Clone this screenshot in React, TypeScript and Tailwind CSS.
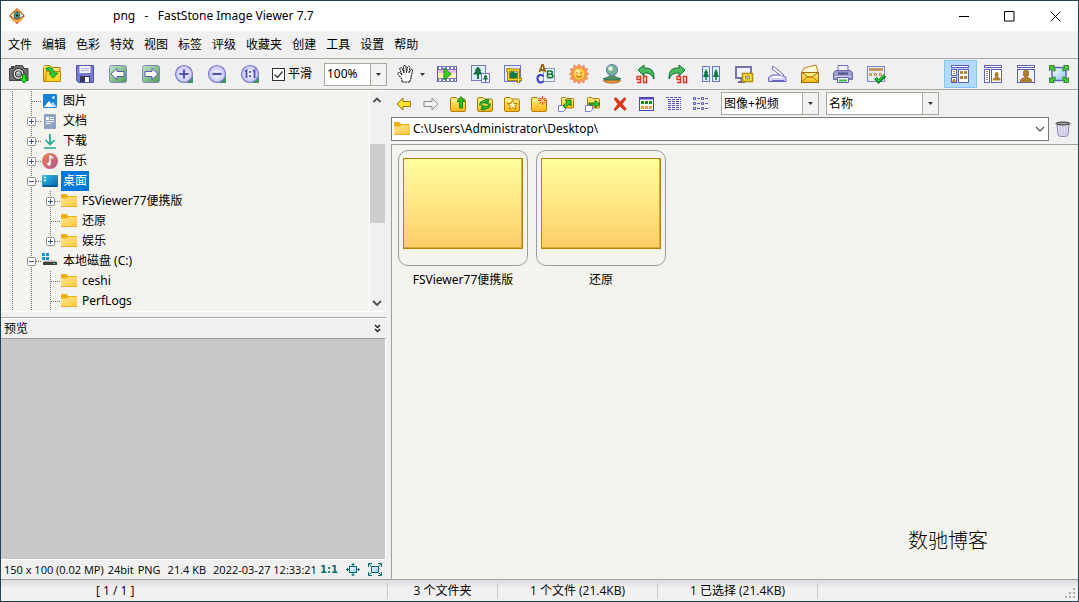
import { useState } from 'react';
import type { ReactNode } from 'react';

type IconProps = { children: ReactNode; size?: number; box?: number };

function Icon({ children, size = 20, box = 20 }: IconProps) {
  return (
    <svg width={size} height={size} viewBox={`0 0 ${box} ${box}`} fill="none" className="shrink-0" aria-hidden="true">
      {children}
    </svg>
  );
}

const Gradients = () => (
  <svg width="0" height="0" className="absolute" aria-hidden="true">
    <defs>
      <linearGradient id="gold" x1="0" y1="0" x2="0" y2="1">
        <stop offset="0" stopColor="#fff08a" />
        <stop offset="1" stopColor="#f9b410" />
      </linearGradient>
      <linearGradient id="folder" x1="0" y1="0" x2="1" y2="1">
        <stop offset="0" stopColor="#ffe595" />
        <stop offset="1" stopColor="#ffc83c" />
      </linearGradient>
      <linearGradient id="green" x1="0" y1="0" x2="1" y2="1">
        <stop offset="0" stopColor="#c3e6c6" />
        <stop offset="1" stopColor="#4f9a58" />
      </linearGradient>
      <radialGradient id="lilac">
        <stop offset="0" stopColor="#ffffff" />
        <stop offset="1" stopColor="#c0c0fa" />
      </radialGradient>
      <linearGradient id="sky" x1="0" y1="0" x2="1" y2="1">
        <stop offset="0" stopColor="#ffffff" />
        <stop offset="1" stopColor="#8cc4f4" />
      </linearGradient>
      <linearGradient id="screen" x1="0" y1="0" x2="1" y2="1">
        <stop offset="0" stopColor="#35bfe6" />
        <stop offset="1" stopColor="#0763ad" />
      </linearGradient>
      <linearGradient id="note" x1="0" y1="0" x2="1" y2="1">
        <stop offset="0" stopColor="#ef8354" />
        <stop offset="1" stopColor="#b1538f" />
      </linearGradient>
    </defs>
  </svg>
);

/* Main toolbar icons */

const Camera = () => (
  <Icon>
    <path d="M.5 4.500h4l2-3h7l1.500 3h4v12H.5z" fill="#6e6e6e" stroke="#444" />
    <path d="M2 3h3" stroke="#444" strokeWidth="2" />
    <circle cx="9.500" cy="10" r="5.500" fill="#e0e0e0" stroke="#222" />
    <circle cx="9.500" cy="10" r="3.200" fill="#9a9fa8" stroke="#333" />
    <path d="M7.500 9.500q1-2 3-1.500" stroke="#fff" />
    <path d="M13.500 10.500h3v4H19l-4 4.500-4-4.500h2.500z" fill="#1fe61f" stroke="#0a8a0a" />
  </Icon>
);

const OpenFolder = () => (
  <Icon>
    <path d="M1.500 17.500V3.500l1.500-2h5l2 2h8v14z" fill="url(#gold)" stroke="#b37900" />
    <path d="M4 17.500V7.500h14.500v10z" fill="#ffd52e" stroke="#c18b00" />
    <path d="M4 4q7-2 8.500 5H16l-5 5-4-5h2.500Q9 6 4 6z" fill="#25d13b" stroke="#087b1a" strokeWidth=".8" />
  </Icon>
);

const Save = () => (
  <Icon>
    <path d="M1.500 1.500h17v17h-15l-2-2z" fill="#7478cf" stroke="#5054b0" />
    <path d="M4.500 2h11v7h-11z" fill="#f4f4ff" />
    <path d="M6 4.500h8M6 6.500h8" stroke="#b0b0d8" />
    <path d="M5 12h10v6H5z" fill="#35385a" />
    <path d="M10 13h4v5h-4z" fill="#fff" />
  </Icon>
);

const PageArrow = ({ flip }: { flip?: boolean }) => (
  <Icon>
    <rect x="1.500" y="1.500" width="17" height="17" rx="2" fill="url(#green)" stroke="#7c8ac0" />
    <path
      d={flip ? 'M17 10l-6-5.500v3H4v5h7v3z' : 'M3 10l6-5.500v3h7v5H9v3z'}
      fill="#fff"
      stroke="#5a5ab5"
    />
  </Icon>
);

const Lens = ({ children }: { children: ReactNode }) => (
  <Icon>
    <path d="M19 12v7h-7z" fill="#3c9552" />
    <circle cx="10" cy="10" r="8.500" fill="url(#lilac)" stroke="#7878cc" strokeWidth="1.200" />
    {children}
  </Icon>
);

const ZoomIn = () => (
  <Lens>
    <path d="M5.500 10h9M10 5.500v9" stroke="#5050b5" strokeWidth="2.200" />
  </Lens>
);

const ZoomOut = () => (
  <Lens>
    <path d="M5.500 10h9" stroke="#5050b5" strokeWidth="2.200" />
  </Lens>
);

const ActualSize = () => (
  <Lens>
    <path d="M5 7.500l1.500-1V14M13 7.500l1.500-1V14M10 7v2M10 11v2" stroke="#5050b5" strokeWidth="1.800" />
  </Lens>
);

const Hand = () => (
  <Icon>
    <path
      d="M6 18v-3L2.500 11q-1.500-2 0-2.500 1-.3 2 1L6 11 4 5.500q-.4-1.800.8-2 1-.1 1.500 1.300L8 9 7.500 3q0-1.500 1.300-1.500Q10 1.500 10 3l.5 5.500 1-5q.4-1.400 1.500-1.200 1 .2.8 1.600L13 9l1.500-3q.7-1 1.600-.6.8.4.4 1.600L15 13v2l-1 1v2z"
      fill="#fff"
      stroke="#000"
      strokeDasharray="2 .6"
    />
  </Icon>
);

const Film = () => (
  <Icon>
    <path d="M0 2h20v16H0z" fill="#7878cc" />
    <path d="M0 6h20v8H0z" fill="#f4b8e4" />
    <path d="M0 9h20v5H0z" fill="#fff1b8" />
    <path d="M2 4h17M2 16h17" stroke="#fff" strokeWidth="2" strokeDasharray="2 2" />
    <path d="M7 4l7 6-7 6z" fill="#3bd21d" stroke="#128d0d" />
    <path d="M.5 2v16M19.500 2v16" stroke="#5c5cb5" />
  </Icon>
);

const Resize = () => (
  <Icon>
    <rect x="1.500" y="1.500" width="14" height="15" fill="#dceefd" stroke="#7777c8" />
    <path d="M8 2.500l3.500 4H10l3 4H9v4.500H7v-4.500H3l3-4H4.500z" fill="#11753f" />
    <rect x="11.500" y="9.500" width="8" height="9" fill="#f6faff" stroke="#7777c8" />
    <path d="M15.500 10.500l2 2.500h-1l2 2.500H16V18h-1v-2.500h-2.500l2-2.500h-1z" fill="#11753f" />
  </Icon>
);

const Crop = () => (
  <Icon>
    <rect x="1.500" y="1.500" width="16" height="16" fill="#e2edff" stroke="#7474c8" />
    <path d="M6 5h9v9H6z" fill="#a9d8f3" />
    <path d="M9 6l3 3h3v6H6v-4z" fill="#157a42" />
    <path d="M3 6h12.500v13M5.500 4v11.500H19" stroke="#8b6700" strokeWidth="3" />
    <path d="M3.500 6h12v12.500M5.500 4.500v11h13" stroke="#ffdc22" strokeWidth="1.400" />
  </Icon>
);

const Draw = () => (
  <Icon>
    <rect x="7.500" y="4.500" width="11" height="13" fill="#ebf4ff" stroke="#9393d0" />
    <path d="M3.500 8l2.500-7h1l2.500 7M5 6h4" stroke="#9a6210" strokeWidth="1.800" />
    <path d="M7.500 12.500Q6.500 10.500 4 11t-2.500 3.500T4 18.500q2.500.5 3.500-1.500" stroke="#2c3fd1" strokeWidth="2" />
    <path d="M11.500 6.500v7M11.500 7h2.800q2 0 2 1.600t-2 1.600h-2.800 3q2.500 0 2.500 1.700t-2.500 1.700h-3" stroke="#167b22" strokeWidth="1.600" />
  </Icon>
);

const Sun = () => (
  <Icon>
    <path
      d="M10 0l2 3 3-2 .5 3.500 3.500.5-2 3 3 2-3 2 2 3-3.500.5L15 19l-3-2-2 3-2-3-3 2-.5-3.500L1 15l2-3-3-2 3-2-2-3 3.500-.5L5 1l3 2z"
      fill="#f79a60"
      stroke="#ee6c3c"
      strokeWidth=".6"
    />
    <circle cx="10" cy="10" r="6" fill="#ffcf45" stroke="#e59a30" />
    <circle cx="8.500" cy="8" r="2.200" fill="#fff4b0" />
    <path d="M8 8v1.500M12 8v1.500M7 11.500q3 3.500 6 0" stroke="#a84a13" />
  </Icon>
);

const Stamp = () => (
  <Icon>
    <ellipse cx="10" cy="16.500" rx="8.500" ry="2.500" fill="#f39a3f" stroke="#b9601d" />
    <path d="M1.500 14.500q7-1 7-5h3q0 4 7 5l-1 1.500h-15z" fill="#4d946a" stroke="#296a4a" />
    <circle cx="10" cy="6" r="5.500" fill="#77b296" stroke="#5b7ba1" />
    <circle cx="8.500" cy="4.500" r="2.300" fill="#eaf8f2" />
  </Icon>
);

const RotateGlyph = () => (
  <path d="M5.500 15.500H2v-3h3.500v6H2M8.500 12.500h3v6h-3z" stroke="#e03a1c" strokeWidth="1.400" />
);

const RotateLeft = () => (
  <Icon>
    <path d="M3 6l6-5v3q11-1 10 11-3-7-10-6v3z" fill="#4bbb5e" stroke="#146c36" />
    <RotateGlyph />
  </Icon>
);

const RotateRight = () => (
  <Icon>
    <path d="M17 6l-6-5v3Q0 3 1 15q3-7 10-6v3z" fill="#4bbb5e" stroke="#146c36" />
    <g transform="translate(7 0)">
      <RotateGlyph />
    </g>
  </Icon>
);

const Compare = () => (
  <Icon>
    <rect x="1.500" y="2.500" width="7" height="15" fill="#d5efff" stroke="#7272c0" />
    <rect x="11.500" y="2.500" width="7" height="15" fill="#d5efff" stroke="#7272c0" />
    <path d="M5 5l2 4h-.7L8 13H5.700v3H4.300v-3H2l1.700-4H3zM15 5l2 4h-.7l1.700 4h-2.300v3h-1.400v-3H12l1.700-4H13z" fill="#08763e" />
  </Icon>
);

const SlideShow = () => (
  <Icon>
    <rect x="2" y="3" width="15" height="11" fill="#eef3ff" stroke="#6868a8" strokeWidth="1.800" />
    <path d="M4 18h7M7.500 15v3" stroke="#6868a8" strokeWidth="2" />
    <rect x="8.500" y="9.500" width="10" height="8" fill="#ffe35a" stroke="#b39200" strokeWidth="1.600" />
    <path d="M11.500 12h4v3h-4z" fill="#a9bff0" stroke="#b58b00" />
  </Icon>
);

const Scanner = () => (
  <Icon>
    <path d="M1.500 13.500L5 11h10l4 2.500v4h-17.500z" fill="#d2d2f8" stroke="#6464be" />
    <path d="M6 2l11 9-2 1.500L5 5z" fill="#fff" stroke="#6767bc" />
    <path d="M4 14h13l-3-2H8z" fill="#fff" />
    <path d="M5 16.500h12" stroke="#6767bc" />
  </Icon>
);

const Mail = () => (
  <Icon>
    <path d="M2 8l2-4 12-3 2 7" fill="#fff8d8" stroke="#b98512" />
    <path d="M1.500 8.500v10h17v-10L10 12z" fill="url(#gold)" stroke="#a06800" />
    <path d="M2 8.500h16L12 13H8z" fill="#ffe98a" stroke="#a86e00" />
    <path d="M2 18l5-5h6l5 5" stroke="#b87e00" />
  </Icon>
);

const Printer = () => (
  <Icon>
    <path d="M5 1.500h10v7H5z" fill="#f0f0ff" stroke="#7070b8" />
    <path d="M.5 8.500L3 6.500h14l2.500 2v7H.5z" fill="#9c9ccc" stroke="#6868aa" />
    <path d="M5 9.500h10" stroke="#4c4c80" strokeWidth="2" />
    <path d="M2 12.500h16" stroke="#d4d4f3" />
    <path d="M4.500 13.500h11v5h-11z" fill="#f4f4ff" stroke="#6464ae" />
    <path d="M6 16.500h8" stroke="#38bd45" strokeWidth="2" />
  </Icon>
);

const Settings = () => (
  <Icon>
    <rect x="1.500" y="2.500" width="17" height="15" fill="#e4eefe" stroke="#7f84cd" />
    <path d="M3 4h14v3H3z" fill="#c39a5c" />
    <path d="M3.500 9.500h2v2h-2zM8.500 9.500h2v2h-2zM13.500 9.500h2v2h-2z" fill="#fff" stroke="#bd8528" />
    <path d="M9.500 14l3 3.500 6.500-6" stroke="#087c14" strokeWidth="3.400" />
    <path d="M10 14.500l2.500 2.500 6-5.500" stroke="#35cc36" strokeWidth="1.400" />
  </Icon>
);

/* View mode icons */

const person = 'M8 6a3 3 0 0 1 6 0v3l-1 1v1q4 1 4 3v2H5v-2q0-2 4-3v-1L8 9z';

const ViewBrowser = () => (
  <Icon>
    <rect x="1.500" y="1.500" width="17" height="2" fill="#fff" stroke="#6060b8" />
    <rect x="1.500" y="5.500" width="5" height="6" fill="#fff" stroke="#6060b8" />
    <path d="M3 7.500h2M3 9.500h2" stroke="#b78b3c" />
    <rect x="1.500" y="13.500" width="5" height="5" fill="#fff" stroke="#6060b8" />
    <path d="M2 18v-1l1-1v-1h2v1l1 1v1z" fill="#b78b3c" />
    <rect x="8.500" y="5.500" width="10" height="13" fill="#fff" stroke="#6060b8" />
    <path d="M10 8.500h3M14 8.500h3M10 13.500h3M14 13.500h3" stroke="#b0842d" strokeWidth="3" />
  </Icon>
);

const ViewSplit = () => (
  <Icon>
    <rect x="1.500" y="1.500" width="17" height="2" fill="#fff" stroke="#6060b8" />
    <rect x="1.500" y="5.500" width="5" height="13" fill="#fff" stroke="#6060b8" />
    <path d="M3 7.500h2M3 9.500h2M3 11.500h2M3 13.500h2M3 15.500h2" stroke="#b78b3c" />
    <rect x="8.500" y="5.500" width="10" height="13" fill="#fff" stroke="#6060b8" />
    <path d={person} transform="translate(6.500 6) scale(.65)" fill="#ad8030" />
  </Icon>
);

const ViewPreview = () => (
  <Icon>
    <rect x="1.500" y="1.500" width="17" height="2" fill="#fff" stroke="#6060b8" />
    <rect x="1.500" y="5.500" width="17" height="13" fill="#edf3ff" stroke="#6060b8" />
    <path d={person} transform="translate(-1 3) scale(1 .95)" fill="#ad8030" />
  </Icon>
);

const FullScreen = () => (
  <Icon>
    <rect x="3" y="3.500" width="14" height="13" fill="url(#sky)" stroke="#5e5eb8" strokeWidth="1.500" />
    <path
      d="M.5 1.500h5L4.200 3 7 5.700 5.200 7.500 2.500 4.800.5 6.500zM19.500 1.500h-5L15.800 3 13 5.700l1.800 1.800 2.700-2.700 2 1.700zM.5 18.500h5L4.200 17 7 14.300l-1.800-1.800-2.700 2.700-2-1.700zM19.500 18.500h-5l1.300-1.500-2.800-2.700 1.800-1.800 2.700 2.700 2-1.700z"
      fill="#4fce38"
      stroke="#137d13"
      strokeWidth=".8"
    />
  </Icon>
);

/* Navigation toolbar icons, 18px */

const Back = () => (
  <Icon size={18} box={18}>
    <path d="M2 9l6-6v3.500h7.500v5H8V15z" fill="#ffe13e" stroke="#a57200" />
  </Icon>
);

const Forward = () => (
  <Icon size={18} box={18}>
    <path d="M16 9l-6-6v3.500H2v5h8V15z" fill="#f4f4f4" stroke="#8b8b8b" />
  </Icon>
);

const GoldFolder = ({ children }: { children: ReactNode }) => (
  <Icon size={18} box={18}>
    <path d="M1.500 4q0-1.500 1.500-1.500h4l1.500 1.500H15q1.500 0 1.500 1.500V15q0 1.500-1.500 1.500H3q-1.500 0-1.500-1.500z" fill="url(#gold)" stroke="#b37c08" />
    <path d="M3 5.500h5" stroke="#fffbd0" />
    {children}
  </Icon>
);

const FolderUp = () => (
  <GoldFolder>
    <path d="M10.500 13V6.500H8l4-5 4 5h-2.500V13z" fill="#20c520" stroke="#086d08" strokeWidth=".8" />
  </GoldFolder>
);

const FolderRefresh = () => (
  <GoldFolder>
    <path d="M4.500 10.500q0-4 4.500-4M13.500 8.500q0 4.500-4.500 4.500" stroke="#087d16" strokeWidth="2.600" />
    <path d="M9 4.500h4L12 9 8 8zM9 15H5l1-4.500 4 1z" fill="#1fa82c" stroke="#087d16" strokeWidth=".6" />
    <path d="M4.500 10.500q0-4 4.500-4M13.500 8.500q0 4.500-4.500 4.500" stroke="#5fe85f" strokeWidth=".8" />
  </GoldFolder>
);

const FolderStar = () => (
  <GoldFolder>
    <path d="M9.500 5l1.500 3.500h3.500l-2.700 2.300 1 3.700-3.300-2-3.300 2 1-3.700L4.500 8.500H8z" fill="#fff8bd" stroke="#b98500" />
  </GoldFolder>
);

const FolderNew = () => (
  <GoldFolder>
    <path d="M12.500 1v9M8 5.500h9M9.500 2.500l6 6M15.500 2.500l-6 6" stroke="#f04725" />
    <circle cx="12.500" cy="5.500" r="1.500" fill="#ffe4a0" />
  </GoldFolder>
);

const PageCorner = () => (
  <path d="M1.500 10.500h7v4l-2 2h-5z" fill="#fff" stroke="#8080c8" />
);

const CopyTo = () => (
  <Icon size={18} box={18}>
    <path d="M4.500 3.500q0-1 1-1h3l1 1h6q1 0 1 1V12q0 1-1 1h-11z" fill="url(#gold)" stroke="#b37c08" />
    <PageCorner />
    <path d="M6 11l4-4-2-2h6v6l-2-2-4 4z" fill="#2ecc2e" stroke="#075f0a" strokeWidth=".8" />
  </Icon>
);

const MoveTo = () => (
  <Icon size={18} box={18}>
    <path d="M3.500 3.500q0-1 1-1h3l1 1h6q1 0 1 1V12q0 1-1 1h-11z" fill="url(#gold)" stroke="#b37c08" />
    <PageCorner />
    <path d="M5 8h6V5.500L16 9l-5 3.500V10H5z" fill="#2ecc2e" stroke="#075f0a" strokeWidth=".8" />
  </Icon>
);

const Delete = () => (
  <Icon size={18} box={18}>
    <path d="M3 4l2-1.500 4 4.500 4.500-4.500L15 4l-4 5 4.500 5-2 1.500L9 11l-4.500 4.500-1.500-1L7 9z" fill="#e23412" stroke="#bd2405" strokeWidth=".6" />
  </Icon>
);

const Thumbs = () => (
  <Icon size={18} box={18}>
    <rect x="1.500" y="2.500" width="14" height="13" fill="#fff" stroke="#4b4bbb" />
    <path d="M2 3.500h13" stroke="#4b4bbb" strokeWidth="2" />
    <path d="M3 7.500h11" stroke="#149014" strokeWidth="3" strokeDasharray="3 1" />
    <path d="M3 12.500h11" stroke="#f79a3a" strokeWidth="3" strokeDasharray="3 1" />
  </Icon>
);

const Details = () => (
  <Icon size={18} box={18}>
    <path d="M1 2.500h15M3 4.500h13M3 6.500h13M3 8.500h13M3 10.500h13M3 12.500h13M3 14.500h13" stroke="#5959ba" strokeDasharray="3 1" />
  </Icon>
);

const ListView = () => (
  <Icon size={18} box={18}>
    <path d="M1.500 2.500h2v2h-2zM1.500 7.500h2v2h-2zM1.500 12.500h2v2h-2zM9.500 2.500h2v2h-2zM9.500 7.500h2v2h-2zM9.500 12.500h2v2h-2z" stroke="#5959ba" />
    <path d="M5 3.500h3M5 8.500h3M5 13.500h3M13 3.500h3M13 8.500h3M13 13.500h3" stroke="#5959ba" />
  </Icon>
);

const Trash = () => (
  <Icon size={18} box={18}>
    <path d="M3 4l1 11q.3 1.500 5 1.500t5-1.500L15 4z" fill="#e4dff2" stroke="#8484b8" />
    <path d="M6 6l.5 9M9 6v9M12 6l-.5 9" stroke="#c2bbda" />
    <ellipse cx="9" cy="3.500" rx="7" ry="1.500" fill="#999" stroke="#353535" />
  </Icon>
);

/* Tree icons, 16px */

const Folder = () => (
  <Icon size={16} box={16}>
    <path d="M0 2q0-1 1-1h4.500L7 3h8q1 0 1 1v3H0z" fill="#f0ad12" />
    <path d="M0 5.500h6L7.500 4H16v9.500H0z" fill="url(#folder)" />
    <path d="M0 13.500h16" stroke="#e9ad29" />
  </Icon>
);

const Pictures = () => (
  <Icon size={16} box={16}>
    <rect x="1" y="1" width="14" height="14" rx="1" fill="#1683d8" />
    <path d="M2 14l5-6 5 6z" fill="#fff" />
    <path d="M9.500 10.500l1.500-1.500 4 5h-3z" fill="#b9dcf8" />
    <circle cx="11.500" cy="4.500" r="1.200" fill="#fff" />
  </Icon>
);

const Documents = () => (
  <Icon size={16} box={16}>
    <rect x="2" y="1" width="12" height="15" rx="1" fill="#8ba3c7" />
    <path d="M4 4h3v3H4z" fill="#fff" />
    <path d="M8 4.500h4M8 6.500h4M4 8.500h8M4 10.500h5" stroke="#fff" />
  </Icon>
);

const Downloads = () => (
  <Icon size={16} box={16}>
    <path d="M8 1v10M3.500 7L8 11.500 12.500 7M2 15h12" stroke="#18aa91" strokeWidth="1.700" />
  </Icon>
);

const Music = () => (
  <Icon size={16} box={16}>
    <circle cx="8" cy="8" r="8" fill="url(#note)" />
    <path d="M8 11V3q2 .5 3 2.500" stroke="#fff" strokeWidth="1.500" />
    <circle cx="7" cy="11" r="1.800" fill="#fff" />
  </Icon>
);

const Desktop = () => (
  <Icon size={16} box={16}>
    <rect x="0" y="2" width="16" height="12" rx="1" fill="url(#screen)" />
    <path d="M2 4.500h2M2 7.500h2" stroke="#fff" strokeWidth="1.600" />
    <path d="M1 13h14" stroke="#074f88" strokeWidth="1.500" />
  </Icon>
);

const Disk = () => (
  <Icon size={16} box={16}>
    <path d="M0 0h3v3H0zM4 0h3v3H4zM0 4h3v3H0zM4 4h3v3H4z" fill="#1593dc" />
    <path d="M3 7.500h10.500l1.500 2H1z" fill="#b4b4b4" />
    <path d="M1 9h14v3H1z" fill="#3d3f42" />
    <path d="M11 10.500h2" stroke="#45df75" />
  </Icon>
);

function Logo() {
  return (
    <Icon size={18} box={18}>
      <path d="M9 1l3 3H6zM9 17l3-3H6zM1 9l3-3v6zM17 9l-3-3v6z" fill="#db3524" />
      <circle cx="9" cy="9" r="6.500" fill="#f2a03c" />
      <path d="M2 8.500q7-8 14 0-7 7-14 0z" fill="#fff5df" stroke="#8a5a3c" />
      <circle cx="9" cy="8.500" r="3" fill="#5da98a" stroke="#345e50" />
      <circle cx="9" cy="8.500" r="1.200" fill="#102018" />
    </Icon>
  );
}

const menus = ['文件', '编辑', '色彩', '特效', '视图', '标签', '评级', '收藏夹', '创建', '工具', '设置', '帮助'];

const fileTools = [
  { label: '获取', icon: <Camera /> },
  { label: '打开', icon: <OpenFolder /> },
  { label: '保存', icon: <Save /> },
  { label: '上一张', icon: <PageArrow /> },
  { label: '下一张', icon: <PageArrow flip /> },
  { label: '放大', icon: <ZoomIn /> },
  { label: '缩小', icon: <ZoomOut /> },
  { label: '实际大小', icon: <ActualSize /> },
];

const editTools = [
  { label: '幻灯片', icon: <Film /> },
  { label: '调整大小', icon: <Resize /> },
  { label: '裁剪', icon: <Crop /> },
  { label: '绘图', icon: <Draw /> },
  { label: '调整光线', icon: <Sun /> },
  { label: '克隆', icon: <Stamp /> },
  { label: '向左旋转', icon: <RotateLeft /> },
  { label: '向右旋转', icon: <RotateRight /> },
  { label: '比较', icon: <Compare /> },
  { label: '墙纸', icon: <SlideShow /> },
  { label: '扫描', icon: <Scanner /> },
  { label: '邮件', icon: <Mail /> },
  { label: '打印', icon: <Printer /> },
  { label: '选项', icon: <Settings /> },
];

const viewTools = [
  { label: '浏览器', icon: <ViewBrowser /> },
  { label: '窗口', icon: <ViewSplit /> },
  { label: '预览', icon: <ViewPreview /> },
  { label: '全屏', icon: <FullScreen /> },
];

const navTools = [
  { label: '后退', icon: <Back /> },
  { label: '前进', icon: <Forward /> },
  { label: '向上', icon: <FolderUp /> },
  { label: '刷新', icon: <FolderRefresh /> },
  { label: '收藏', icon: <FolderStar /> },
  { label: '新建文件夹', icon: <FolderNew /> },
  { label: '复制到', icon: <CopyTo /> },
  { label: '移动到', icon: <MoveTo /> },
  { label: '删除', icon: <Delete /> },
  { label: '缩略图', icon: <Thumbs /> },
  { label: '详细信息', icon: <Details /> },
  { label: '列表', icon: <ListView /> },
];

// guide cells: '|' line, 't' branch, '+' / '-' branch with a toggle, 'e' last toggle of its branch
const tree = [
  { name: '图片', icon: <Pictures />, guides: '|t' },
  { name: '文档', icon: <Documents />, guides: '|+' },
  { name: '下载', icon: <Downloads />, guides: '|+' },
  { name: '音乐', icon: <Music />, guides: '|+' },
  { name: '桌面', icon: <Desktop />, guides: '|-' },
  { name: 'FSViewer77便携版', icon: <Folder />, guides: '||+' },
  { name: '还原', icon: <Folder />, guides: '||t' },
  { name: '娱乐', icon: <Folder />, guides: '||e' },
  { name: '本地磁盘 (C:)', icon: <Disk />, guides: '|-' },
  { name: 'ceshi', icon: <Folder />, guides: '||t' },
  { name: 'PerfLogs', icon: <Folder />, guides: '||t' },
];

function Guide({ kind }: { kind: string }) {
  const toggle = kind === '+' || kind === '-' || kind === 'e';
  return (
    <svg width="19" height="20" viewBox="0 0 19 20" fill="none" className="shrink-0" aria-hidden="true">
      <path d={kind === 'e' ? 'M9.500 0v10' : 'M9.500 0v20'} stroke="#707070" strokeDasharray="1 1" />
      {kind !== '|' && <path d="M10 10.500h9" stroke="#707070" strokeDasharray="1 1" />}
      {toggle && (
        <>
          <rect x="5.500" y="6.500" width="8" height="8" rx="1" fill="#fff" stroke="#919191" />
          <path d={kind === '-' ? 'M7 10.500h5' : 'M7 10.500h5M9.500 8v5'} stroke="#3c54a0" />
        </>
      )}
    </svg>
  );
}

type Tool = { label: string; icon: ReactNode };

function ToolButton({ tool, active }: { tool: Tool; active?: boolean }) {
  return (
    <button
      aria-label={tool.label}
      className={`flex h-7 w-[33px] shrink-0 items-center border pl-[5px] ${
        active ? 'border-[#84c5fb] bg-[#b3daff]' : 'border-transparent hover:bg-[#d8eafa]'
      }`}
    >
      {tool.icon}
    </button>
  );
}

function Combo({ label, options, className }: { label: string; options: string[]; className: string }) {
  return (
    <div className={`relative h-[23px] shrink-0 border border-[#aca899] bg-white ${className}`}>
      <select aria-label={label} className="block h-full w-full appearance-none bg-transparent pr-4 pl-[2px] outline-none">
        {options.map((o) => (
          <option key={o}>{o}</option>
        ))}
      </select>
      <span className="pointer-events-none absolute inset-y-0 right-0 flex w-4 items-center justify-center border-l border-[#aca899] bg-[#f3f3f3]">
        <Caret />
      </span>
    </div>
  );
}

const Caret = () => (
  <svg width="5" height="3" viewBox="0 0 5 3" aria-hidden="true">
    <path d="M0 0h5L2.500 3z" fill="#333" />
  </svg>
);

function Chevron({ up, thin }: { up?: boolean; thin?: boolean }) {
  return (
    <svg width="10" height="6" viewBox="0 0 10 6" fill="none" aria-hidden="true">
      <path
        d={up ? 'M1.500 5L5 1.500 8.500 5' : 'M1 1l4 4 4-4'}
        stroke="#505050"
        strokeWidth={thin ? 1.1 : 1.8}
      />
    </svg>
  );
}

export default function App() {
  const [selected, setSelected] = useState('桌面');
  const [path, setPath] = useState('C:\\Users\\Administrator\\Desktop\\');

  return (
    <div className="flex h-screen flex-col overflow-hidden border border-[#24424f] bg-[#f0f0f0] font-['Noto_Sans','Noto_Sans_CJK_SC',sans-serif] text-[12px] leading-5 text-black">
      <Gradients />

      {/* Title bar */}
      <header className="flex h-[30px] shrink-0 items-center bg-white pl-[7px]">
        <Logo />
        <h1 className="ml-[87px] flex-1 whitespace-pre">png   -   FastStone Image Viewer 7.7</h1>
        <button aria-label="最小化" className="flex h-full w-[45px] items-center justify-center">
          <Icon size={11} box={11}><path d="M0 5.500h10" stroke="#000" /></Icon>
        </button>
        <button aria-label="最大化" className="flex h-full w-[45px] items-center justify-center">
          <Icon size={11} box={11}><path d="M.5.5h9.500v9.500H.5z" stroke="#000" /></Icon>
        </button>
        <button aria-label="关闭" className="flex h-full w-[46px] items-center justify-center">
          <Icon size={11} box={11}><path d="M.5.5l10 10M10.500.5l-10 10" stroke="#000" /></Icon>
        </button>
      </header>

      {/* Menu */}
      <nav className="flex h-7 shrink-0 items-center border-b border-[#aca899] pl-[2px]">
        {menus.map((m) => (
          <button key={m} className="px-[5px] hover:bg-[#cce8ff]">{m}</button>
        ))}
      </nav>

      {/* Main toolbar */}
      <div className="flex h-[31px] shrink-0 items-center border-b border-[#aca899] px-[2px]">
        {fileTools.map((t) => <ToolButton key={t.label} tool={t} />)}
        <label className="ml-[5px] flex w-[52px] shrink-0 items-center gap-[3px] whitespace-nowrap">
          <span className="relative flex">
            <input type="checkbox" defaultChecked className="peer h-[13px] w-[13px] appearance-none border border-[#333] bg-white" />
            <svg width="13" height="13" viewBox="0 0 13 13" fill="none" className="pointer-events-none absolute inset-0 hidden peer-checked:block" aria-hidden="true">
              <path d="M2.500 6.500l3 3 5-6" stroke="#333" strokeWidth="1.200" />
            </svg>
          </span>
          平滑
        </label>
        <Combo label="缩放" options={['100%', '50%', '200%']} className="w-[63px]" />
        <button aria-label="手形工具" className="ml-[9px] flex w-[35px] shrink-0 items-center gap-1">
          <Hand />
          <Caret />
        </button>
        {editTools.map((t) => <ToolButton key={t.label} tool={t} />)}
        <div className="ml-auto flex">
          {viewTools.map((t, i) => <ToolButton key={t.label} tool={t} active={i === 0} />)}
        </div>
      </div>

      <main className="flex min-h-0 flex-1 gap-[5px]">
        {/* Folder tree and preview */}
        <aside className="flex w-[385px] shrink-0 flex-col">
          <div className="flex min-h-0 flex-1 border-y border-white bg-[#f4f3ee]">
            <ul className="min-w-0 flex-1 pl-[2px]">
              {tree.map((item) => (
                <li key={item.name} className="flex h-5 items-center">
                  {item.guides.split('').map((g, i) => <Guide key={i} kind={g} />)}
                  <span className="flex w-5 shrink-0 pl-px">{item.icon}</span>
                  <button
                    onClick={() => setSelected(item.name)}
                    className={`h-5 px-[2px] whitespace-nowrap ${selected === item.name ? 'bg-[#0078d7] text-white' : ''}`}
                  >
                    {item.name}
                  </button>
                </li>
              ))}
            </ul>
            <div className="flex w-[17px] flex-col border-l border-white bg-[#f0f0f0]">
              <button aria-label="向上滚动" className="flex h-[17px] items-center pl-[2px]"><Chevron up /></button>
              <div className="mt-9 h-[79px] w-[15px] bg-[#cdcdcd]" />
              <button aria-label="向下滚动" className="mt-auto flex h-[17px] items-center pl-[2px]"><Chevron /></button>
            </div>
          </div>

          <section className="mt-[5px] shrink-0 border-t border-[#aca899]">
            <div className="flex h-5 items-center justify-between border-t border-white pr-1 pl-[3px]">
              <h2>预览</h2>
              <button aria-label="折叠预览" className="flex">
                <Icon size={9} box={9}>
                  <path d="M2 1l2.500 2.500L7 1M2 5l2.500 2.500L7 5" stroke="#222" strokeWidth="1.500" />
                </Icon>
              </button>
            </div>
            <div className="h-[221px] border-t border-r border-t-[#9a9a9a] border-r-white bg-[#c8c8c8]" />
            <div className="flex h-5 items-center border-t border-white pr-1 pl-[3px] font-['Open_Sans','Noto_Sans_CJK_SC',sans-serif] text-[11px] whitespace-nowrap">
              <span>150 x 100 (0.02 MP)</span>
              <span className="ml-1">24bit</span>
              <span className="ml-1">PNG</span>
              <span className="ml-[7px]">21.4 KB</span>
              <span className="ml-[7px] flex-1">2022-03-27 12:33:21</span>
              <button className="font-['DejaVu_Sans',sans-serif] text-[10px] font-bold text-[#0b6e6c]">1:1</button>
              <button aria-label="适合窗口" className="ml-2">
                <Icon size={14} box={14}>
                  <rect x="3.500" y="3.500" width="7" height="6" fill="url(#sky)" stroke="#0b6e6c" />
                  <path d="M0 6.500h3M11 6.500h3M7 0v3M7 10v3M1.500 5v3M12.500 5v3M5.500 1.500h3M5.500 12h3" stroke="#0b6e6c" />
                </Icon>
              </button>
              <button aria-label="全屏预览" className="ml-2">
                <Icon size={14} box={14}>
                  <rect x="3.500" y="3.500" width="7" height="6" fill="url(#sky)" stroke="#0b6e6c" />
                  <path d="M.5 4V.5H4M10 .5h3.500V4M.5 9v3.500H4M10 12.500h3.500V9M1 1l2 2M13 1l-2 2M1 12l2-2M13 12l-2-2" stroke="#0b6e6c" />
                </Icon>
              </button>
            </div>
          </section>
        </aside>

        {/* File browser */}
        <section className="flex min-w-0 flex-1 flex-col">
          <div className="flex h-[27px] shrink-0 items-center">
            {navTools.map((t) => (
              <button key={t.label} aria-label={t.label} className="flex h-[26px] w-[27px] shrink-0 items-center pl-1 hover:bg-[#d8eafa]">
                {t.icon}
              </button>
            ))}
            <Combo label="文件类型" options={['图像+视频', '所有文件']} className="ml-[6px] w-[98px]" />
            <Combo label="排序" options={['名称', '大小', '日期']} className="ml-[7px] w-[113px]" />
          </div>

          <div className="flex shrink-0 items-center">
            <div className="flex h-6 min-w-0 flex-1 items-center gap-[3px] border border-[#7a7a7a] bg-white pr-[3px] pl-[2px]">
              <Folder />
              <input
                aria-label="路径"
                value={path}
                onChange={(e) => setPath(e.target.value)}
                className="min-w-0 flex-1 bg-transparent outline-none"
              />
              <button aria-label="路径列表"><Chevron thin /></button>
            </div>
            <button aria-label="回收站" className="flex w-[29px] shrink-0 pl-[5px]"><Trash /></button>
          </div>

          <div className="relative mt-[3px] flex-1 border-t border-l border-[#a0a0a0] bg-[#f4f3ee]">
            <ul className="flex flex-wrap gap-2 px-[6px] pt-[5px]">
              {['FSViewer77便携版', '还原'].map((name) => (
                <li key={name} className="w-[130px] text-center">
                  <div className="h-[116px] rounded-[10px] border border-[#9b9b9b] px-1 pt-[7px]">
                    <div className="h-[91px] border border-[#b98405] bg-linear-to-b from-[#ffff9e] to-[#fccd68] shadow-[inset_-1px_-1px_0_#d9a830]" />
                  </div>
                  <p className="mt-1">{name}</p>
                </li>
              ))}
            </ul>
            <p className="absolute right-[90px] bottom-[25px] font-['Noto_Sans_CJK_SC',sans-serif] text-[20px] leading-7 font-light">数驰博客</p>
          </div>
        </section>
      </main>

      {/* Status bar */}
      <footer className="flex h-[22px] shrink-0 items-center border-t border-[#a0a0a0] bg-linear-to-b from-[#dcdcdc] to-[#f0f0f0] to-40% font-['Open_Sans','Noto_Sans_CJK_SC',sans-serif] whitespace-nowrap">
        <div className="flex w-[387px] justify-start border-r border-[#c8c8c8] pl-[95px] leading-4">[ 1 / 1 ]</div>
        <div className="w-[110px] border-r border-[#c8c8c8] text-center leading-4">3 个文件夹</div>
        <div className="w-40 border-r border-[#c8c8c8] text-center leading-4">1 个文件 (21.4KB)</div>
        <div className="w-40 border-r border-[#c8c8c8] text-center leading-4">1 已选择 (21.4KB)</div>
        <span className="mt-auto mr-[2px] mb-[2px] ml-auto">
          <Icon size={12} box={12}>
            <path d="M9 1h2v2H9zM5 5h2v2H5zM9 5h2v2H9zM1 9h2v2H1zM5 9h2v2H5zM9 9h2v2H9z" fill="#b5adad" />
          </Icon>
        </span>
      </footer>
    </div>
  );
}
